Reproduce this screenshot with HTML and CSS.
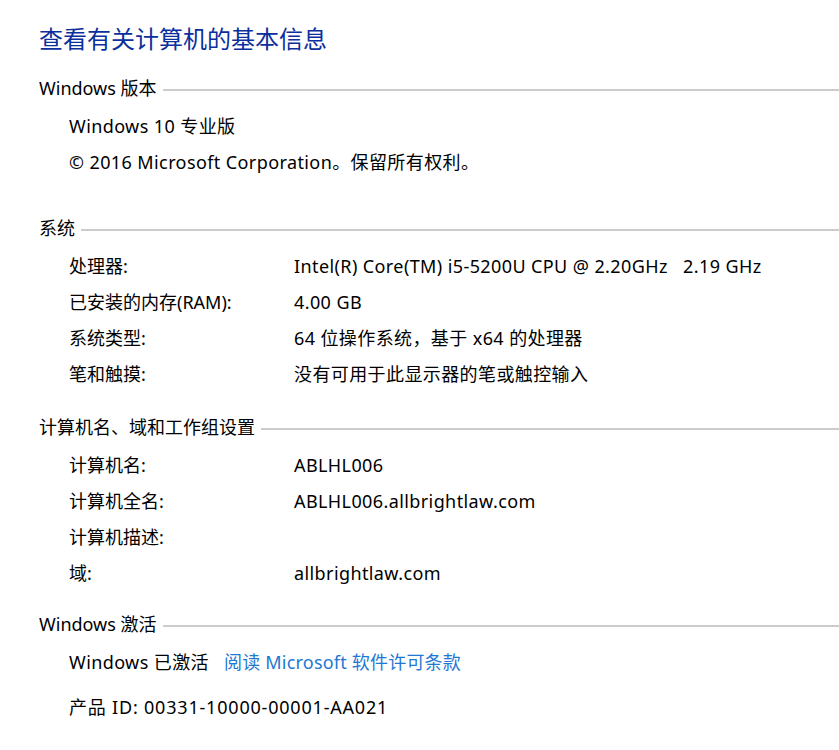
FILE: index.html
```html
<!DOCTYPE html>
<html lang="zh-CN">
<head>
  <meta charset="UTF-8" />
  <title>系统</title>
  <link rel="stylesheet" href="styles.css">
</head>
<body>
  <div class="page">
    <h1 class="title">查看有关计算机的基本信息</h1>

    <div class="section first">
      <div class="section-head">Windows 版本</div>
      <div class="line">Windows 10 专业版</div>
      <div class="line">© 2016 Microsoft Corporation。保留所有权利。</div>
    </div>

    <div class="section system">
      <div class="section-head">系统</div>
      <div class="row"><span class="label">处理器:</span><span class="value">Intel(R) Core(TM) i5-5200U CPU @ 2.20GHz &nbsp; 2.19 GHz</span></div>
      <div class="row"><span class="label">已安装的内存(RAM):</span><span class="value">4.00 GB</span></div>
      <div class="row"><span class="label">系统类型:</span><span class="value">64 位操作系统，基于 x64 的处理器</span></div>
      <div class="row"><span class="label">笔和触摸:</span><span class="value">没有可用于此显示器的笔或触控输入</span></div>
    </div>

    <div class="section">
      <div class="section-head">计算机名、域和工作组设置</div>
      <div class="row"><span class="label">计算机名:</span><span class="value">ABLHL006</span></div>
      <div class="row"><span class="label">计算机全名:</span><span class="value">ABLHL006.allbrightlaw.com</span></div>
      <div class="row"><span class="label">计算机描述:</span><span class="value"></span></div>
      <div class="row"><span class="label">域:</span><span class="value">allbrightlaw.com</span></div>
    </div>

    <div class="section">
      <div class="section-head">Windows 激活</div>
      <div class="line">Windows 已激活 <a class="link" href="#">阅读 Microsoft 软件许可条款</a></div>
      <div class="line product">产品 ID: 00331-10000-00001-AA021</div>
    </div>
  </div>
</body>
</html>
```

FILE: styles.css
```css
body {
  margin: 0;
  background: #fff;
  color: #000;
  font-family: "Noto Sans", "Noto Sans CJK SC", sans-serif;
  font-size: 18px;
}
.page {
  padding: 21px 0 0 39px;
}
.title {
  margin: 0 0 13px;
  font-size: 24px;
  font-weight: normal;
  line-height: 36px;
  color: #0b2f9c;
}
.section {
  margin-bottom: 15px;
}
.section.first {
  margin-bottom: 30px;
}
.section.system {
  margin-bottom: 17px;
}
.section-head {
  display: flex;
  align-items: center;
  line-height: 36px;
  margin-bottom: 2px;
}
.section-head::after {
  content: "";
  flex: 1;
  height: 2px;
  margin-left: 6px;
  margin-top: 3px;
  background: #cccccc;
}
.line, .row {
  line-height: 36px;
  padding-left: 30px;
  white-space: nowrap;
}
.line, .value {
  letter-spacing: 0.4px;
}
.row {
  display: flex;
}
.label {
  width: 225px;
  flex-shrink: 0;
}
.link {
  color: #1e78d4;
  text-decoration: none;
  margin-left: 10px;
  letter-spacing: 0.2px;
}
.product {
  margin-top: 9px;
  letter-spacing: 0.8px;
}
```
